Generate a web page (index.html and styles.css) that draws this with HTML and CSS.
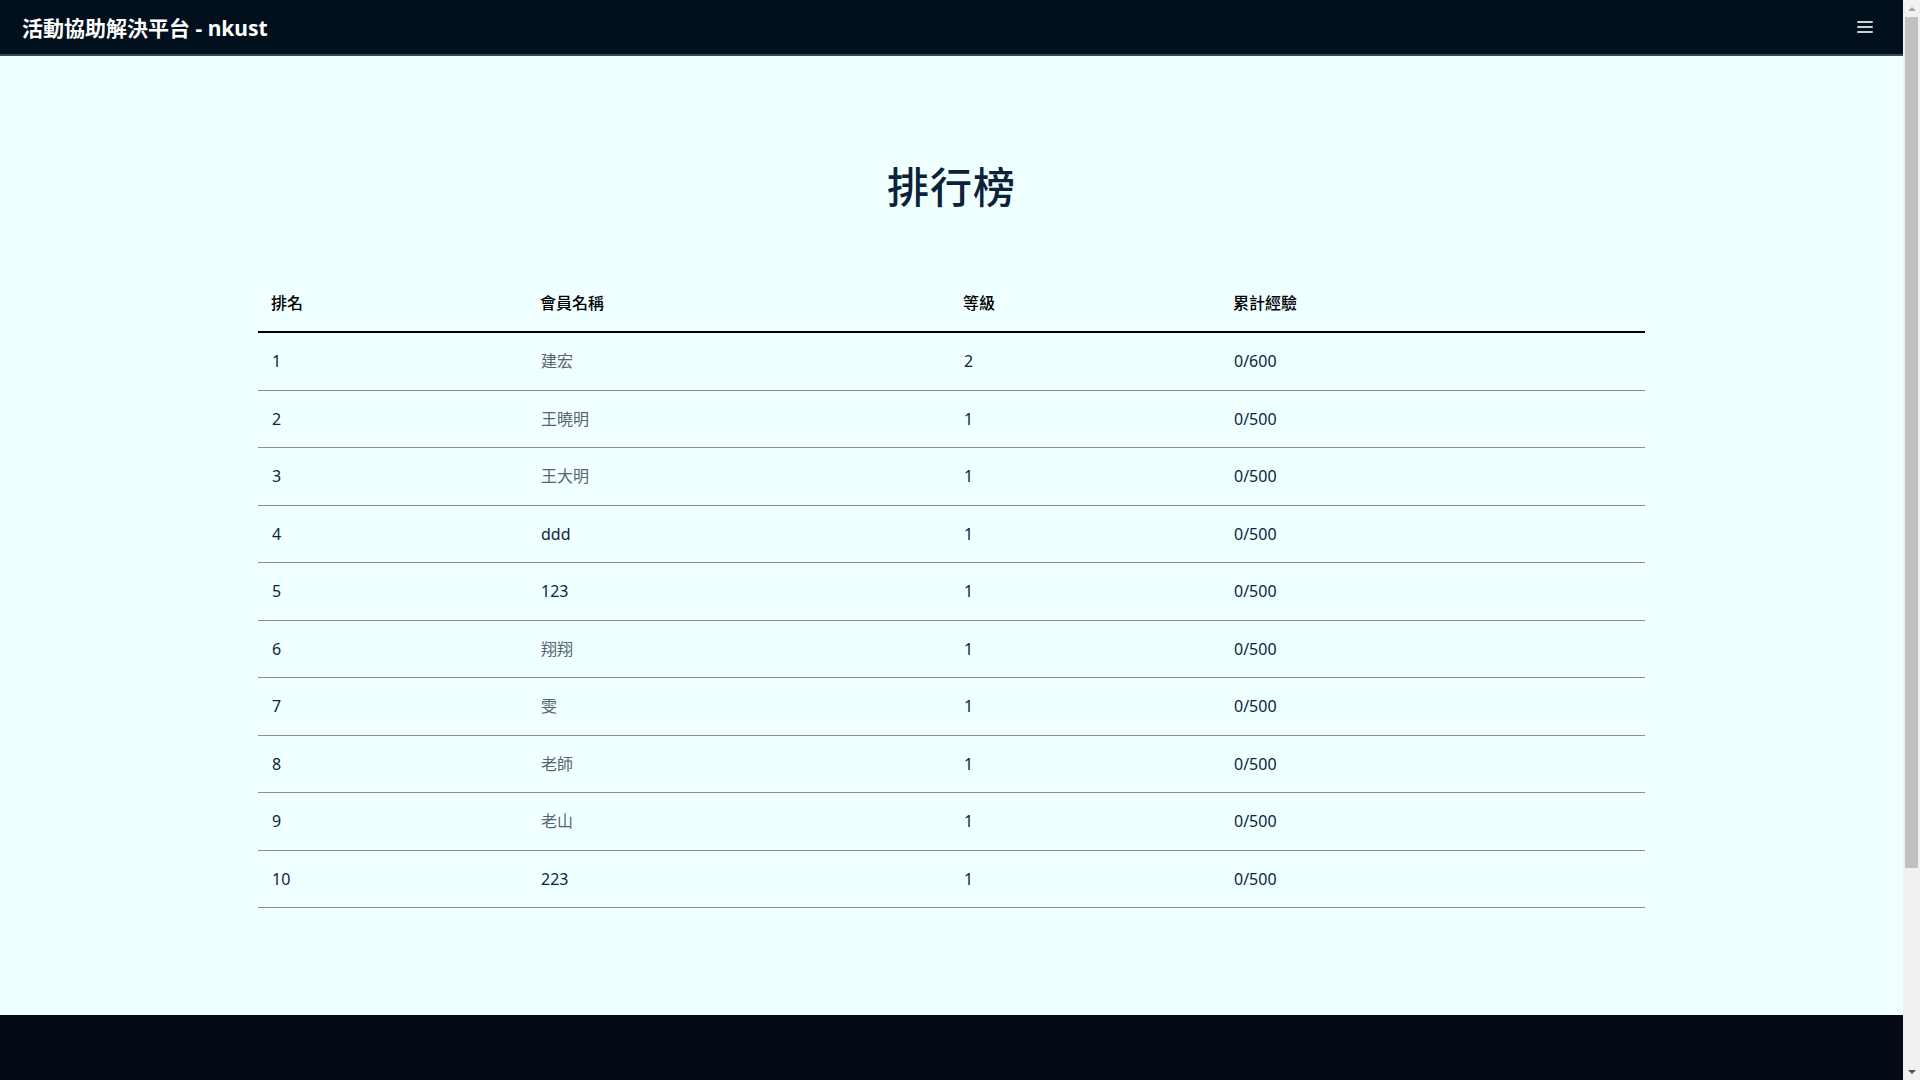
FILE: index.html
```html
<!DOCTYPE html>
<html lang="zh-Hant">
<head>
<meta charset="utf-8">
<title>排行榜 - 活動協助解決平台</title>
<link rel="stylesheet" href="styles.css">
</head>
<body>
<div class="page">
  <header class="navbar">
    <div class="brand">活動協助解決平台 - nkust</div>
    <button class="menu-btn" aria-label="menu">
      <span></span><span></span><span></span>
    </button>
  </header>
  <main class="main">
    <h1 class="title">排行榜</h1>
    <table class="rank-table">
      <colgroup>
        <col class="c1"><col class="c2"><col class="c3"><col class="c4">
      </colgroup>
      <thead>
        <tr><th>排名</th><th>會員名稱</th><th>等級</th><th>累計經驗</th></tr>
      </thead>
      <tbody>
        <tr><td>1</td><td class="name">建宏</td><td>2</td><td>0/600</td></tr>
        <tr><td>2</td><td class="name">王曉明</td><td>1</td><td>0/500</td></tr>
        <tr><td>3</td><td class="name">王大明</td><td>1</td><td>0/500</td></tr>
        <tr><td>4</td><td>ddd</td><td>1</td><td>0/500</td></tr>
        <tr><td>5</td><td>123</td><td>1</td><td>0/500</td></tr>
        <tr><td>6</td><td class="name">翔翔</td><td>1</td><td>0/500</td></tr>
        <tr><td>7</td><td class="name">雯</td><td>1</td><td>0/500</td></tr>
        <tr><td>8</td><td class="name">老師</td><td>1</td><td>0/500</td></tr>
        <tr><td>9</td><td class="name">老山</td><td>1</td><td>0/500</td></tr>
        <tr><td>10</td><td>223</td><td>1</td><td>0/500</td></tr>
      </tbody>
    </table>
  </main>
  <footer class="footer"></footer>
</div>
<div class="scrollbar" aria-hidden="true">
  <div class="sb-arrow sb-up"></div>
  <div class="sb-track"><div class="sb-thumb"></div></div>
  <div class="sb-arrow sb-down"></div>
</div>
</body>
</html>
```
FILE: styles.css
```css
html, body {
  margin: 0;
  padding: 0;
}
body {
  background: #f0ffff;
  font-family: "Noto Sans", "Noto Sans CJK TC", sans-serif;
  color: #0d2440;
}
.page {
  width: calc(100% - 17px);
}
.navbar {
  height: 54px;
  background: #020f1d;
  border-bottom: 2px solid #3a4a57;
  display: flex;
  align-items: center;
  justify-content: space-between;
  padding: 0 30px 0 22px;
}
.brand {
  color: #ffffff;
  font-size: 21px;
  font-weight: 700;
  font-family: "Noto Sans", "Noto Sans CJK TC", sans-serif;
  margin-top: -1px;
}
.menu-btn {
  background: none;
  border: 0;
  padding: 0;
  width: 16px;
  display: flex;
  flex-direction: column;
  gap: 3px;
  cursor: pointer;
}
.menu-btn span {
  display: block;
  height: 2px;
  background: #c9d1d8;
  border-radius: 1px;
}
.main {
  padding: 106px 0 107px;
  display: flex;
  flex-direction: column;
  align-items: center;
}
.title {
  margin: 0 0 63px;
  font-size: 42px;
  line-height: 50px;
  font-weight: 500;
  color: #0b2238;
  letter-spacing: 1px;
}
.rank-table {
  width: 1387px;
  border-collapse: collapse;
  font-size: 16px;
}
.c1 { width: 269px; }
.c2 { width: 423px; }
.c3 { width: 270px; }
.c4 { width: auto; }
.rank-table th {
  text-align: left;
  font-weight: 500;
  color: #000;
  padding: 16px 13px;
  line-height: 24px;
  border-bottom: 2px solid #000;
}
.rank-table td {
  padding: 16px 14px 16.5px;
  line-height: 24px;
  border-bottom: 1px solid #8a8f8f;
  color: #0d2440;
}
.rank-table td.name {
  color: #5a6470;
}
.footer {
  height: 312px;
  background: #030a14;
}
.scrollbar {
  position: fixed;
  top: 0;
  right: 0;
  width: 17px;
  height: 100vh;
  background: #f1f1f1;
  display: flex;
  flex-direction: column;
}
.sb-arrow {
  height: 17px;
  flex: none;
  display: flex;
  align-items: center;
  justify-content: center;
}
.sb-up::before {
  content: "";
  border-left: 4px solid transparent;
  border-right: 4px solid transparent;
  border-bottom: 4px solid #a3a3a3;
}
.sb-down::before {
  content: "";
  border-left: 4px solid transparent;
  border-right: 4px solid transparent;
  border-top: 4px solid #505050;
}
.sb-track {
  flex: 1;
  padding: 0 2px;
}
.sb-thumb {
  height: 851px;
  background: #c1c1c1;
}
```
